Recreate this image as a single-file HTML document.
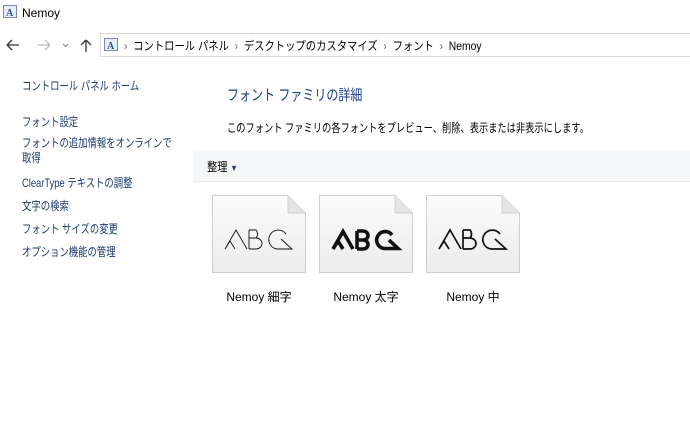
<!DOCTYPE html>
<html><head><meta charset="utf-8"><style>
body{margin:0;width:690px;height:446px;background:#fff;font-family:"Liberation Sans","Noto Sans CJK JP",sans-serif;font-size:12px;color:#000;position:relative;overflow:hidden}
.a{position:absolute;white-space:nowrap;transform-origin:0 0}
.n{transform:scaleX(0.78)}
.side{color:#1a3c6e;font-size:12px}
.lbl{position:absolute;top:288px;font-size:12px;width:94px;text-align:center}
</style></head><body>
<svg class="a" style="left:3px;top:5px" width="14" height="13"><rect x="0.5" y="0.5" width="13" height="12" fill="#e8eef8" stroke="#7a8aa8"/><text x="3" y="11" font-size="10" font-family="Liberation Serif" fill="#2050a0" font-weight="bold">A</text></svg>
<div class="a" style="left:22px;top:6px;font-size:12px">Nemoy</div>
<svg class="a" style="left:4px;top:37px" width="90" height="16"><path d="M3 8h12M3 8l5-5M3 8l5 5" stroke="#333" stroke-width="1.3" fill="none"/><path d="M34 8h12M46 8l-5-5M46 8l-5 5" stroke="#bbb" stroke-width="1.3" fill="none"/><path d="M59 7l2.5 2.5 2.5-2.5" stroke="#888" fill="none"/><path d="M82 3v12M82 3l-5 5M82 3l5 5" stroke="#333" stroke-width="1.3" fill="none"/></svg>
<div class="a" style="left:100px;top:33px;width:600px;height:22px;border:1px solid #d9d9d9"></div>
<svg class="a" style="left:104px;top:38px" width="14" height="13"><rect x="0.5" y="0.5" width="13" height="12" fill="#e8eef8" stroke="#7a8aa8"/><text x="3" y="11" font-size="10" font-family="Liberation Serif" fill="#2050a0" font-weight="bold">A</text></svg>
<div class="a" style="left:124px;top:37px;font-size:12px;transform:scaleX(0.86)"><span style="color:#666">›</span>&nbsp; コントロール パネル &nbsp;<span style="color:#666">›</span>&nbsp; デスクトップのカスタマイズ &nbsp;<span style="color:#666">›</span>&nbsp; フォント &nbsp;<span style="color:#666">›</span>&nbsp; Nemoy</div>
<div class="a side n" style="left:22px;top:77px">コントロール パネル ホーム</div>
<div class="a side n" style="left:22px;top:113px">フォント設定</div>
<div class="a side n" style="left:22px;top:136px;line-height:15px">フォントの追加情報をオンラインで<br>取得</div>
<div class="a side n" style="left:22px;top:174px">ClearType テキストの調整</div>
<div class="a side n" style="left:22px;top:197px">文字の検索</div>
<div class="a side n" style="left:22px;top:220px">フォント サイズの変更</div>
<div class="a side n" style="left:22px;top:243px">オプション機能の管理</div>
<div class="a n" style="left:227px;top:84px;font-size:15px;color:#1e3f8a;transform:scaleX(0.8)">フォント ファミリの詳細</div>
<div class="a n" style="left:227px;top:119px;font-size:12px;transform:scaleX(0.77)">このフォント ファミリの各フォントをプレビュー、削除、表示または非表示にします。</div>
<div class="a" style="left:193px;top:150px;width:497px;height:31px;background:#f5f6f7;border-bottom:1px solid #e8eaec"></div>
<div class="a" style="left:207px;top:158px;font-size:12px;transform:scaleX(0.85)">整理 <span style="color:#1e3f8a;font-size:9px">▼</span></div>
<svg class="a" style="left:0;top:0" width="690" height="446">
<defs><linearGradient id="g" x1="0" y1="0" x2="0" y2="1"><stop offset="0" stop-color="#fbfbfb"/><stop offset="1" stop-color="#ececec"/></linearGradient></defs>
<g transform="translate(212,195)"><path d="M0.5 0.5H76L93.5 18V77.5H0.5Z" fill="url(#g)" stroke="#cfcfcf"/><path d="M76 0.5V18H93.5" fill="#e4e4e4" stroke="#cfcfcf"/></g>
<g transform="translate(319,195)"><path d="M0.5 0.5H76L93.5 18V77.5H0.5Z" fill="url(#g)" stroke="#cfcfcf"/><path d="M76 0.5V18H93.5" fill="#e4e4e4" stroke="#cfcfcf"/></g>
<g transform="translate(426,195)"><path d="M0.5 0.5H76L93.5 18V77.5H0.5Z" fill="url(#g)" stroke="#cfcfcf"/><path d="M76 0.5V18H93.5" fill="#e4e4e4" stroke="#cfcfcf"/></g>
<g fill="none" stroke="#111" stroke-linejoin="miter">
<g transform="translate(225,230)" stroke-width="0.9"><path d="M0 19L11 0L22 19M0 19L5 11L10 19"/><path d="M24 0V19M24 0H31A6 6 0 0 1 31 8H24M31 8A6 5.5 0 0 1 31 19H24"/><path d="M61 4A9.5 9.5 0 1 0 52 19H67L56 9"/></g>
<g transform="translate(332,230)" stroke-width="3.6"><path d="M1 19L11 1.5L21 19M1 19L6 11L11 19"/><path d="M25 1V19M25 1H31A5 4.5 0 0 1 31 10H25M31 10A5 4.5 0 0 1 31 19H25"/><path d="M60 5A8.5 8.5 0 1 0 52 18.5H66L57 10"/></g>
<g transform="translate(439,230)" stroke-width="1.7"><path d="M0 19L11 0L22 19M0 19L5 11L10 19"/><path d="M24 0V19M24 0H31A6 6 0 0 1 31 8H24M31 8A6 5.5 0 0 1 31 19H24"/><path d="M61 4A9.5 9.5 0 1 0 52 19H67L56 9"/></g>
</g></svg>
<div class="lbl" style="left:212px">Nemoy 細字</div>
<div class="lbl" style="left:319px">Nemoy 太字</div>
<div class="lbl" style="left:426px">Nemoy 中</div>
</body></html>
